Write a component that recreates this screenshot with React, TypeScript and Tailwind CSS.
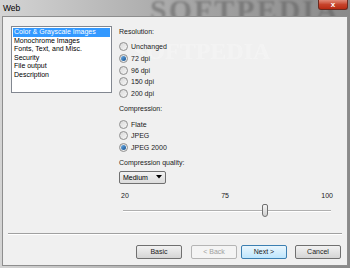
import React from "react";

const font = { fontFamily: "'Liberation Sans', Arial, sans-serif" };

function Radio({ label, checked }: { label: string; checked?: boolean }) {
  return (
    <div className="flex items-center h-[11.7px] gap-[3px]">
      <div className="w-[9px] h-[9px] rounded-full border border-[#8f8f8f] bg-gradient-to-br from-[#d8d8d8] to-[#f7f7f7] flex items-center justify-center">
        {checked && <div className="w-[5px] h-[5px] rounded-full bg-gradient-to-br from-[#6fb0e8] to-[#0d4f8f]" />}
      </div>
      <span className="text-[7px] leading-none text-[#1a1a1a]">{label}</span>
    </div>
  );
}

function Btn({ children, variant }: { children: React.ReactNode; variant?: "default" | "disabled" | "primary" }) {
  const cls =
    variant === "disabled"
      ? "border-[#b5b5b5] text-[#a0a0a0] bg-[#f4f4f4]"
      : variant === "primary"
      ? "border-[#3c7fb1] text-[#1a1a1a] bg-gradient-to-b from-[#eaf6fd] to-[#bee6fd]"
      : "border-[#707070] text-[#1a1a1a] bg-gradient-to-b from-[#f2f2f2] to-[#d5d5d5]";
  return (
    <div className={`h-[14px] w-[46px] rounded-[2px] border flex items-center justify-center text-[7px] leading-none ${cls}`}>
      {children}
    </div>
  );
}

export default function App() {
  return (
    <div style={font} className="w-[350px] h-[268px] relative overflow-hidden bg-gradient-to-r from-[#d4d4d4] via-[#a8a8a8] to-[#8a8a8a]">
      {/* watermark in title */}
      <div className="absolute left-[150px] top-[-13px] text-[30px] font-bold text-[#5a5a5a] opacity-50 blur-[1px] tracking-[2px] whitespace-nowrap" style={{ fontFamily: "'Liberation Serif', serif" }}>
        SOFTPEDIA
      </div>
      <div className="relative flex flex-col h-full">
        {/* title bar */}
        <div className="h-[16px] flex items-start justify-between pl-[3px]">
          <span className="text-[8.5px] leading-none mt-[4px] text-black">Web</span>
          <div className="w-[30px] h-[10px] mr-[2px] rounded-b-[3px] border border-t-0 border-[#6b2a20] bg-gradient-to-b from-[#e08a78] via-[#c7432b] to-[#b72a12] flex items-center justify-center">
            <span className="text-[8px] leading-none text-white font-bold">x</span>
          </div>
        </div>
        {/* body */}
        <div className="ml-[2px] mr-[2px] h-[250px] border border-[#8e8e8e] bg-[#f0f0f0] relative">
          <div className="absolute left-[130px] top-[16px] text-[24px] font-bold text-white opacity-25 whitespace-nowrap" style={{ fontFamily: "'Liberation Serif', serif" }}>
            SOFTPEDIA
          </div>
          <div className="flex pt-[9px] pl-[8px] gap-[7px]">
            <div className="w-[101px] h-[67px] border border-[#828790] bg-white p-[1px]">
              <div className="bg-[#3399ff] text-white text-[7px] leading-[8.6px] px-[1px] whitespace-nowrap">Color &amp; Grayscale Images</div>
              {["Monochrome Images", "Fonts, Text, and Misc.", "Security", "File output", "Description"].map((t) => (
                <div key={t} className="text-[7px] leading-[8.6px] px-[1px] text-black whitespace-nowrap">{t}</div>
              ))}
            </div>
            <div className="flex flex-col relative">
              <div className="text-[7px] leading-none text-[#1a1a1a] mt-[2px] mb-[6px]">Resolution:</div>
              <Radio label="Unchanged" />
              <Radio label="72 dpi" checked />
              <Radio label="96 dpi" />
              <Radio label="150 dpi" />
              <Radio label="200 dpi" />
              <div className="text-[7px] leading-none text-[#1a1a1a] mt-[6px] mb-[6px]">Compression:</div>
              <Radio label="Flate" />
              <Radio label="JPEG" />
              <Radio label="JPEG 2000" checked />
              <div className="text-[7px] leading-none text-[#1a1a1a] mt-[5px] mb-[5px]">Compression quality:</div>
              <div className="w-[47px] h-[13px] rounded-[2px] border border-[#707070] bg-gradient-to-b from-[#f2f2f2] to-[#dcdcdc] flex items-center justify-between px-[3px]">
                <span className="text-[7px] leading-none text-black">Medium</span>
                <svg width="6" height="4" viewBox="0 0 6 4"><path d="M0 0 L6 0 L3 3.5 Z" fill="#000" /></svg>
              </div>
              <div className="w-[215px] flex justify-between text-[7px] leading-none text-[#1a1a1a] mt-[8px] pl-[2px] pr-[1px]">
                <span>20</span>
                <span>75</span>
                <span>100</span>
              </div>
              <div className="relative w-[215px] h-[16px] mt-[3px]">
                <div className="absolute left-[4px] right-[3px] top-[8px] h-[2px] border-t border-[#b0b0b0] border-b border-b-[#ffffff] bg-[#e0e0e0]" />
                <div className="absolute left-[143px] top-[2px] w-[6px] h-[13px] rounded-[2px] rounded-b-[3px] border border-[#707070] bg-gradient-to-b from-[#f4f4f4] to-[#d0d0d0]" />
              </div>
            </div>
          </div>
          <div className="mx-[5px] mt-[15px] h-[2px] border-t border-[#a0a0a0] border-b border-b-white" />
          <div className="flex justify-end mr-[6px] mt-[10px]">
            <Btn>Basic</Btn>
            <div className="w-[9px]" />
            <Btn variant="disabled">&lt; Back</Btn>
            <div className="w-[4px]" />
            <Btn variant="primary">Next &gt;</Btn>
            <div className="w-[8px]" />
            <Btn>Cancel</Btn>
          </div>
        </div>
      </div>
    </div>
  );
}
